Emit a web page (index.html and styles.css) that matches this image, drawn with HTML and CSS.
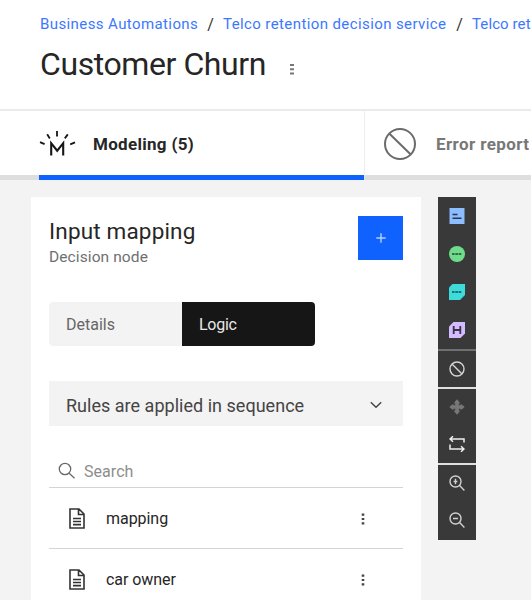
FILE: index.html
```html
<!DOCTYPE html>
<html lang="en">
<head>
<meta charset="utf-8">
<title>Customer Churn</title>
<link rel="stylesheet" href="styles.css">
</head>
<body>
<div class="app">
  <header class="header">
    <nav class="crumbs"><a class="c1">Business Automations</a><span>/</span><a class="c2">Telco retention decision service</a><span>/</span><a class="c3">Telco ret</a></nav>
    <div class="title-row">
      <h1>Customer Churn</h1>
      <svg class="dots" width="6" height="14" viewBox="0 0 6 14"><path d="M1 1h4v2H1zM1 5.2h4v2H1zM1 9.6h4v2H1z" fill="#777"/></svg>
    </div>
  </header>
  <div class="tabs">
    <div class="tab active">
      <svg width="37" height="28" viewBox="0 0 37 28" fill="none" stroke="#161616" stroke-width="1.8"><path d="M12.2 25.5V13.2l6 7.5 6-7.5v12.3" stroke-width="2.1"/><path d="M1 12.2l4.6 2M8.2 4.3l2.6 4.2M18 1v5.5M28.8 4.4l-3 4M36 12.4l-4.8 2"/></svg>
      <span class="tab-label">Modeling (5)</span>
    </div>
    <div class="tab errors">
      <svg width="34" height="34" viewBox="0 0 34 34" fill="none" stroke="#6b6b6b" stroke-width="2"><circle cx="17" cy="17" r="15"/><path d="M6.5 6.8l21 20.4"/></svg>
      <span class="tab-label">Error report</span>
    </div>
  </div>
  <main class="workspace">
    <section class="panel">
      <div class="panel-head">
        <div><h2>Input mapping</h2><p class="kind">Decision node</p></div>
        <button class="add"><svg width="10" height="10" viewBox="0 0 10 10"><path d="M5 .3v9.4M.3 5h9.4" stroke="#b5d0ff" stroke-width="1.4"/></svg></button>
      </div>
      <div class="switch"><span class="details">Details</span><span class="logic">Logic</span></div>
      <div class="select"><span>Rules are applied in sequence</span><svg width="12" height="8" viewBox="0 0 12 8"><path d="M.8 1.2L6 6.3l5.2-5.1" fill="none" stroke="#444" stroke-width="1.4"/></svg></div>
      <div class="search"><svg width="18" height="18" viewBox="0 0 18 18" fill="none" stroke="#686868" stroke-width="1.3"><circle cx="7" cy="7" r="5.7"/><path d="M11.2 11.2l5.3 5"/></svg><span>Search</span></div>
      <div class="row">
        <svg class="doc" width="16" height="21" viewBox="0 0 16 21" fill="none" stroke="#333" stroke-width="1.6"><path d="M1 1h9l5 5v14H1zM9.5 1v5.5H15M4 10.5h8M4 13.5h8M4 16.6h8"/></svg>
        <span class="r1">mapping</span>
        <svg class="dots" width="4" height="12" viewBox="0 0 4 12"><path d="M.7.5h2.6v2.2H.7zM.7 4.9h2.6v2.2H.7zM.7 9.3h2.6v2.2H.7z" fill="#444"/></svg>
      </div>
      <div class="row">
        <svg class="doc" width="16" height="21" viewBox="0 0 16 21" fill="none" stroke="#333" stroke-width="1.6"><path d="M1 1h9l5 5v14H1zM9.5 1v5.5H15M4 10.5h8M4 13.5h8M4 16.6h8"/></svg>
        <span class="r2">car owner</span>
        <svg class="dots" width="4" height="12" viewBox="0 0 4 12"><path d="M.7.5h2.6v2.2H.7zM.7 4.9h2.6v2.2H.7zM.7 9.3h2.6v2.2H.7z" fill="#444"/></svg>
      </div>
    </section>
    <aside class="tools">
      <div class="tool"><svg viewBox="0 0 16 16"><path d="M.5 0h15v16H.5z" fill="#8dbcff"/><path d="M3.5 6.5h5M3.5 10.3h9" stroke="#26374f" stroke-width="1.4"/></svg></div>
      <div class="tool"><svg viewBox="0 0 16 16"><circle cx="8" cy="8" r="8" fill="#6fdc8c"/><path d="M3 8h10" stroke="#23452c" stroke-width="1.5" stroke-dasharray="2.6 .7"/></svg></div>
      <div class="tool"><svg viewBox="0 0 16 16"><path d="M3.5 0H16v11l-5 5H0V3.5z" fill="#3ddbd9"/><path d="M3 8h10" stroke="#174b4b" stroke-width="1.5" stroke-dasharray="2.6 .7"/></svg></div>
      <div class="tool"><svg viewBox="0 0 16 16"><path d="M4.5 0H16v11.5L11.5 16H0V4.5z" fill="#d4bbff"/><path d="M4.7 4v8M11.3 4v8M4.7 8h6.6" fill="none" stroke="#38304a" stroke-width="1.8"/></svg></div>
      <div class="tool sep-dim"><svg viewBox="0 0 16 16" fill="none" stroke="#d5d5d5" stroke-width="1.4"><circle cx="8" cy="8" r="7"/><path d="M3.2 3.2l9.6 9.6"/></svg></div>
      <div class="tool sep"><svg viewBox="0 0 16 16" fill="#777"><path d="M5.4 3.2L8 .3l2.6 2.9v1.6H5.4zM5.4 12.8L8 15.7l2.6-2.9v-1.6H5.4zM3.2 5.4L.3 8l2.9 2.6h1.6V5.4zM12.8 5.4L15.7 8l-2.9 2.6h-1.6V5.4zM6.2 4.8h3.6v6.4H6.2zM4.8 6.2h6.4v3.6H4.8z"/></svg></div>
      <div class="tool"><svg viewBox="0 0 16 16" fill="none" stroke="#eee" stroke-width="1.5"><path d="M15 6.5V3H1M4 .2L1 3l3 2.8M1 8.5V13h14M12 10.2l3 2.8-3 2.8"/></svg></div>
      <div class="tool sep"><svg viewBox="0 0 16 16" fill="none" stroke="#d0d0d0" stroke-width="1.4"><circle cx="6.5" cy="6.5" r="5.5"/><path d="M10.6 10.6l4.8 4.8M6.5 3.8v5.4M4.6 6.5h3.8"/></svg></div>
      <div class="tool"><svg viewBox="0 0 16 16" fill="none" stroke="#d0d0d0" stroke-width="1.4"><circle cx="6.5" cy="6.5" r="5.5"/><path d="M10.6 10.6l4.8 4.8M4 6.5h5"/></svg></div>
    </aside>
  </main>
</div>
</body>
</html>
```
FILE: styles.css
```css
* { box-sizing: border-box; }
body { margin: 0; background: #fff; font-family: Roboto, "Liberation Sans", sans-serif; color: #262626; }
.app { width: 531px; height: 600px; overflow: hidden; display: flex; flex-direction: column; }
svg { display: block; flex: none; }
h1, h2, p { margin: 0; font-weight: 400; }
span, a, h1, h2, p { white-space: nowrap; }
.header { height: 111px; flex: none; border-bottom: 2px solid #ebebeb; padding: 14px 0 0 40px; }
.crumbs { display: flex; height: 21px; line-height: 21px; font-size: 15px; letter-spacing: .4px; color: #333; }
.crumbs > * { flex: none; }
.crumbs a { color: #3b78ff; }
.crumbs span { width: 25px; text-align: center; font-size: 16px; letter-spacing: 0; }
.crumbs .c1 { width: 158px; }
.crumbs .c2 { width: 224px; }
.crumbs .c3 { letter-spacing: .1px; }
.title-row { display: flex; margin-top: 9px; height: 40px; }
h1 { width: 249px; font-size: 32px; line-height: 40px; letter-spacing: -.42px; }
.title-row .dots { margin-top: 19px; }
.tabs { display: flex; height: 69px; flex: none; }
.tab { display: flex; align-items: center; border-bottom: 5px solid #dedede; padding-top: 2px; font-size: 17px; font-weight: 700; letter-spacing: .3px; }
.active { width: 325px; border-bottom-color: #0f62fe; }
.active .tab-label { margin-left: 17px; }
.tabs::before { content: ""; width: 39px; border-bottom: 5px solid #dedede; }
.errors { width: 167px; border-left: 1px solid #eee; padding-left: 18px; color: #777; }
.errors .tab-label { margin-left: 19px; letter-spacing: .4px; }
.workspace { flex: 1; min-height: 0; display: flex; align-items: flex-start; gap: 17px; padding: 17px 0 0 31px; background: #f3f3f3; }
.panel { width: 390px; height: 403px; padding: 19px 18px 0; background: #fff; flex: none; }
.panel-head { display: flex; justify-content: space-between; height: 86px; }
h2 { font-size: 22.5px; line-height: 30px; letter-spacing: .17px; }
.kind { font-size: 15.5px; line-height: 22px; letter-spacing: .1px; color: #6f6f6f; }
.add { width: 45px; height: 44px; padding: 0; border: 0; background: #0f62fe; display: flex; align-items: center; justify-content: center; }
.switch { display: flex; width: 266px; height: 44px; border-radius: 4px; overflow: hidden; font-size: 16px; line-height: 45px; letter-spacing: 0; }
.switch span { flex: 1; padding-left: 17px; }
.details { background: #f3f3f3; color: #666; }
.switch .logic { background: #161616; color: #e8e8e8; letter-spacing: -.25px; }
.select { display: flex; justify-content: space-between; align-items: center; margin-top: 35px; height: 45px; padding: 3px 21px 0 17px; background: #f3f3f3; font-size: 18px; letter-spacing: .02px; color: #444; }
.search { display: flex; align-items: center; height: 62px; padding: 29px 0 0 9px; border-bottom: 1.5px solid #d4d4d4; color: #8d8d8d; font-size: 16px; letter-spacing: .05px; }
.search span { margin-left: 8px; }
.row { display: flex; align-items: center; height: 61px; padding: 1px 38px 0 20px; border-bottom: 1.5px solid #d4d4d4; font-size: 16px; letter-spacing: -.05px; }
.row span { margin-left: 21px; }
.row .dots { margin-left: auto; }
.tools { width: 38px; height: 343px; flex: none; background: #393939; }
.tool { height: 38px; display: flex; justify-content: center; align-items: center; }
.tool svg { width: 16px; height: 16px; }
.sep-dim { border-top: 2px solid #707070; }
.sep { border-top: 2px solid #e0e0e0; }
```
